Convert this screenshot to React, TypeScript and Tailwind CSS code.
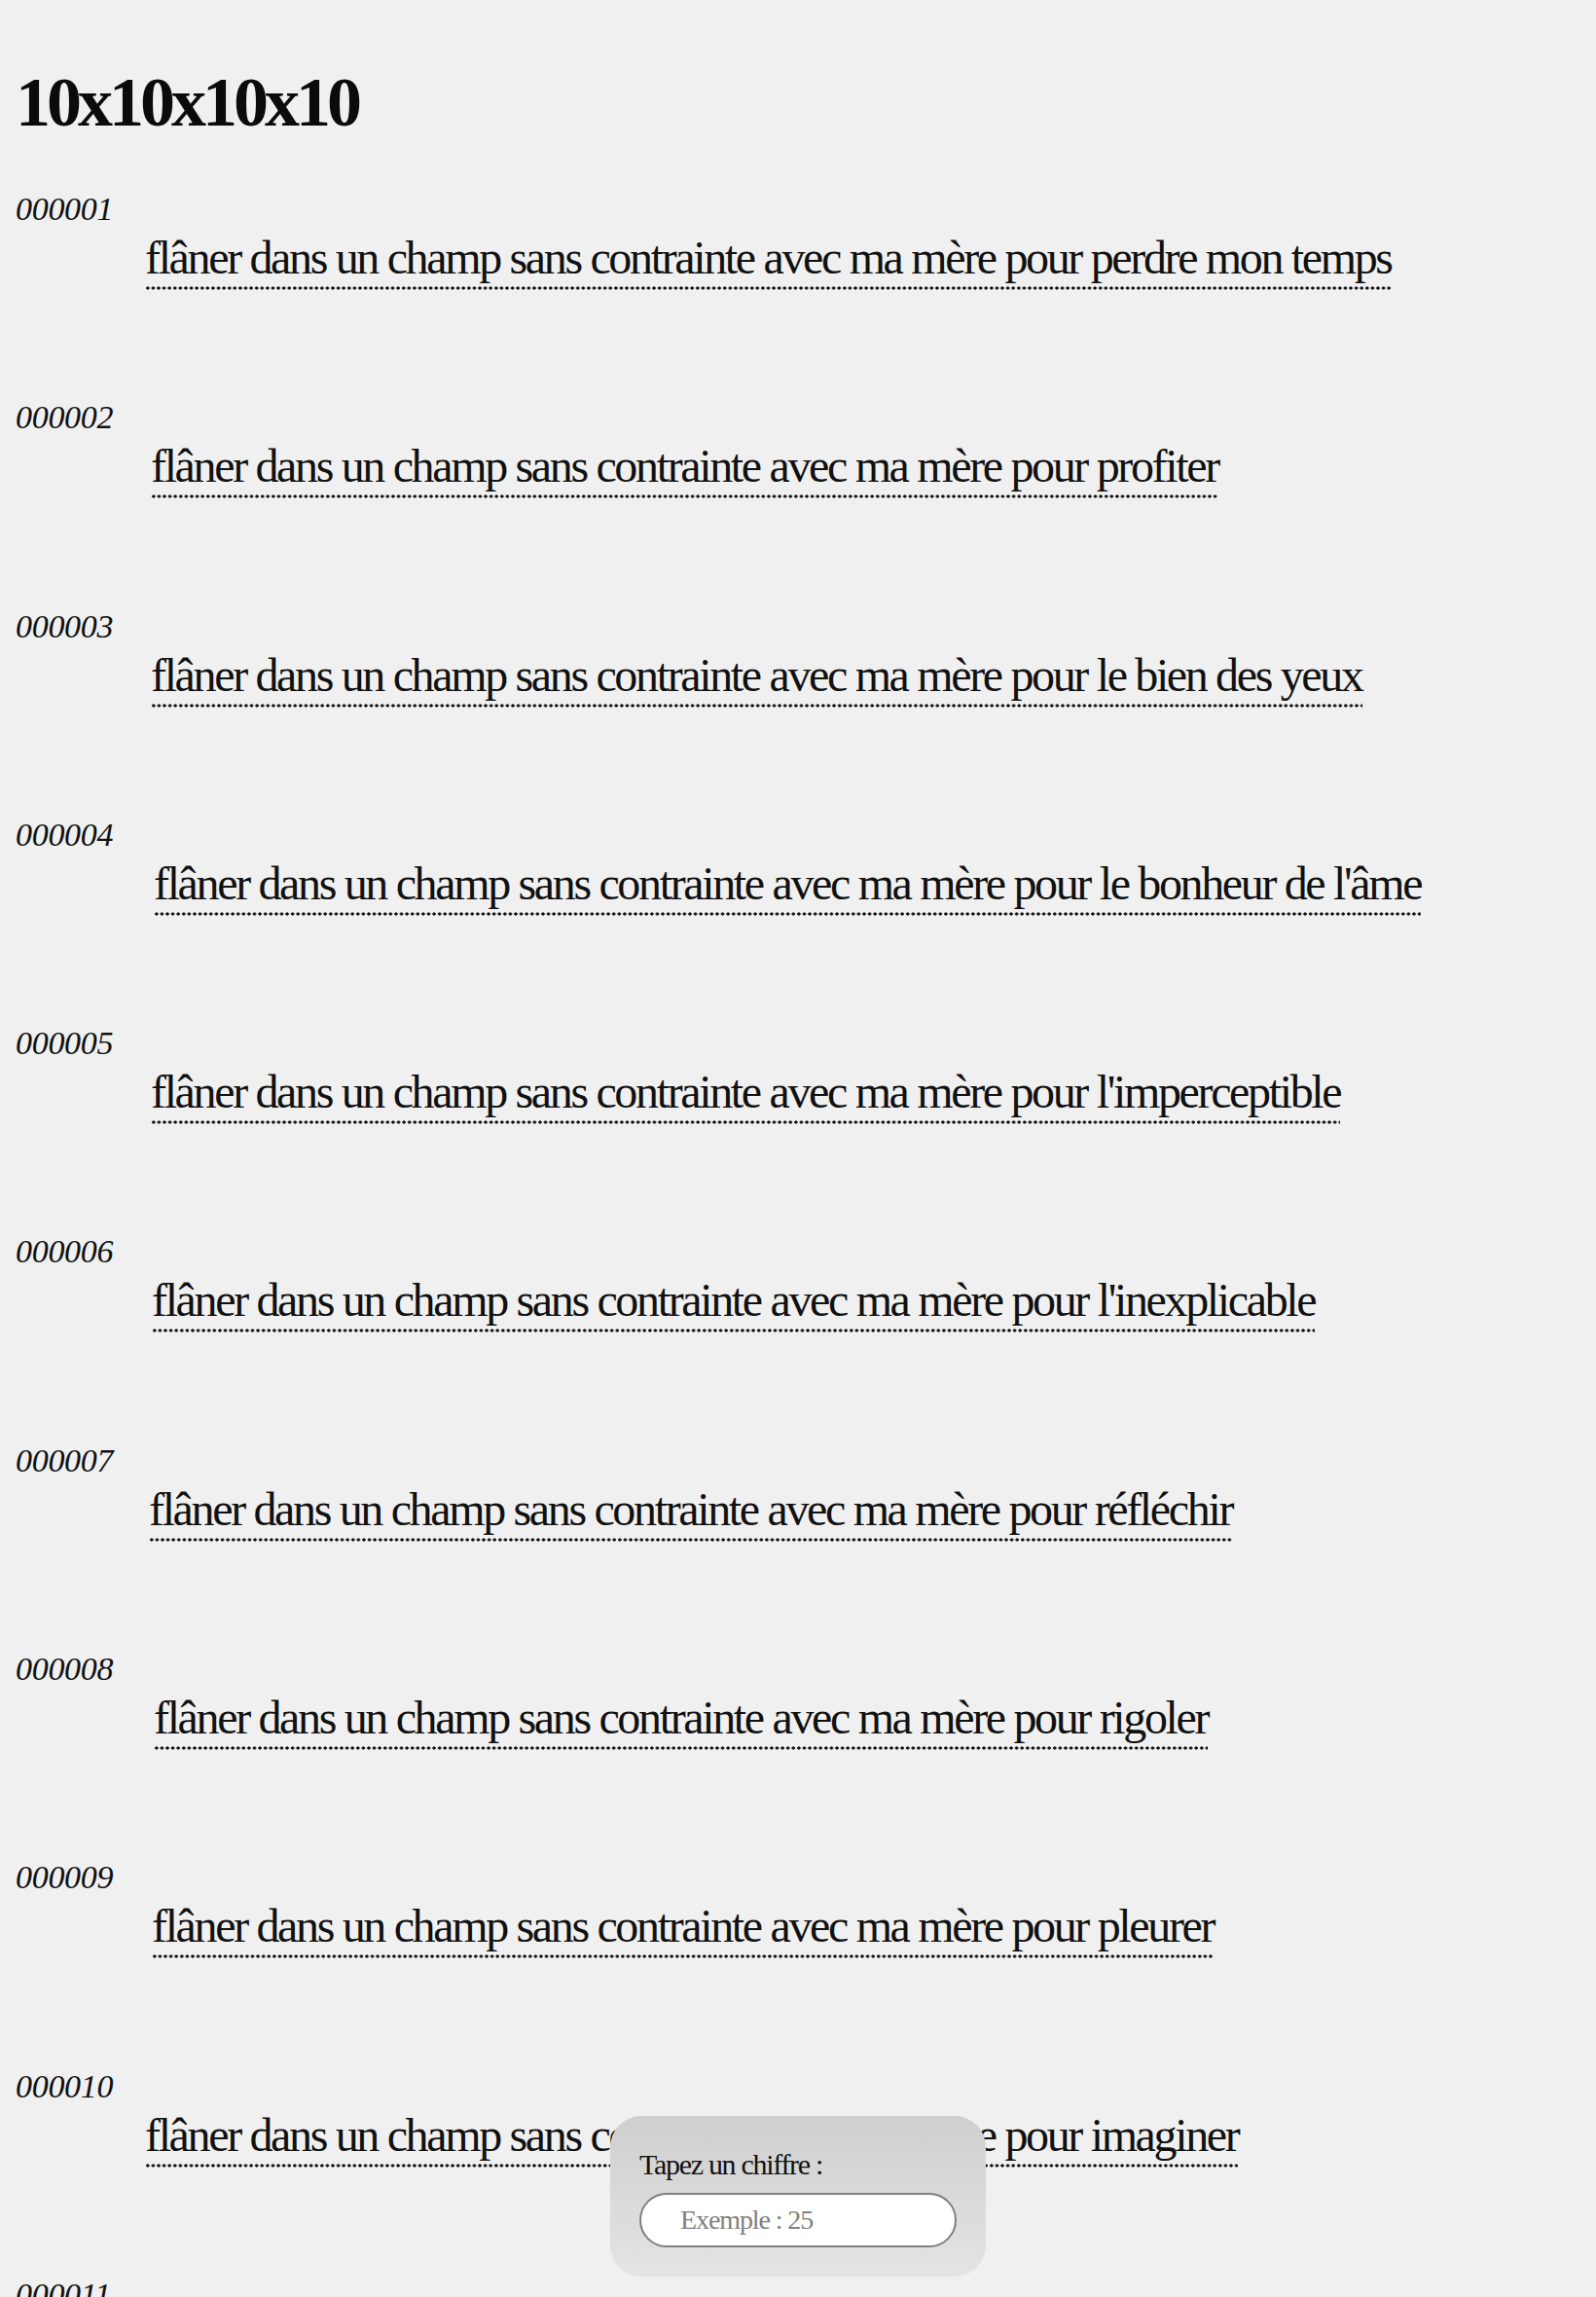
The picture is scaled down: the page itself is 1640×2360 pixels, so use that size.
import { useState } from 'react';

const entries = [
  { id: '000001', end: 'perdre mon temps', indent: 'ml-[133px]' },
  { id: '000002', end: 'profiter', indent: 'ml-[139px]' },
  { id: '000003', end: 'le bien des yeux', indent: 'ml-[139px]' },
  { id: '000004', end: "le bonheur de l'âme", indent: 'ml-[142px]' },
  { id: '000005', end: "l'imperceptible", indent: 'ml-[139px]' },
  { id: '000006', end: "l'inexplicable", indent: 'ml-[140px]' },
  { id: '000007', end: 'réfléchir', indent: 'ml-[137px]' },
  { id: '000008', end: 'rigoler', indent: 'ml-[142px]' },
  { id: '000009', end: 'pleurer', indent: 'ml-[140px]' },
  { id: '000010', end: 'imaginer', indent: 'ml-[133px]' },
  { id: '000011', end: 'rêver', indent: 'ml-[138px]' },
];

const serif = "font-['Liberation_Serif','Times_New_Roman',serif]";

export default function App() {
  const [value, setValue] = useState('');

  return (
    <main className={`h-screen overflow-hidden bg-[#f0f0f0] px-4 pt-[65px] text-[#111] ${serif}`}>
      <h1 className="text-[72px] leading-[80px] font-bold tracking-[-4px] text-[#0b0b0b]">10x10x10x10</h1>

      <ul className="mt-[50px]">
        {entries.map((e) => (
          <li key={e.id} className="h-[214.3px]">
            <div className="text-[34px] leading-[40px] italic tracking-[-0.3px]">{e.id}</div>
            {/* dotted rule drawn as round dots, like the original */}
            <span
              className={`mt-[2px] inline-block bg-[radial-gradient(circle,#0d0d0d_1.4px,transparent_1.8px)] bg-[length:5.6px_4px] bg-left-bottom bg-repeat-x pb-[5px] text-[48px] leading-[56px] tracking-[-2.35px] ${e.indent}`}
            >
              flâner dans un champ sans contrainte avec ma mère pour {e.end}
            </span>
          </li>
        ))}
      </ul>

      <div className="fixed bottom-[21px] left-1/2 w-[386px] -translate-x-1/2 rounded-[32px] bg-gradient-to-b from-[#cfcfcf] to-[#e4e4e4] px-[30px] pt-[32px] pb-[30px]">
        <label className="block text-[30px] leading-[36px] tracking-[-1.3px] text-[#111]">Tapez un chiffre :</label>
        <input
          value={value}
          onChange={(ev) => setValue(ev.target.value)}
          placeholder="Exemple : 25"
          className="mt-[11px] h-[56px] w-full rounded-full border-2 border-[#7f7f7f] bg-white pl-10 text-[28px] tracking-[-1.1px] text-[#111] outline-none placeholder:text-[#808080]"
        />
      </div>
    </main>
  );
}
